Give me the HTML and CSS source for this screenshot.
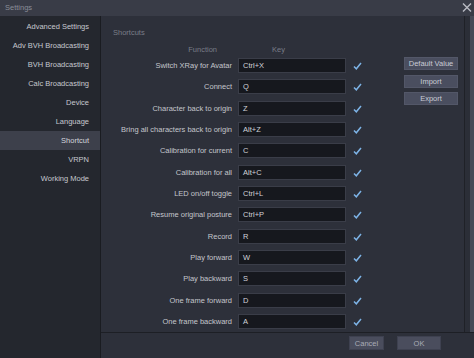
FILE: index.html
```html
<!DOCTYPE html>
<html>
<head>
<meta charset="utf-8">
<link rel="stylesheet" href="styles.css">
</head>
<body>
<div class="titlebar">
  <span class="title">Settings</span>
  <svg class="close" width="10" height="9" viewBox="0 0 10 9"><path d="M1 0.5 L9 8.5 M9 0.5 L1 8.5" stroke="#b9bbc3" stroke-width="1.4"/></svg>
</div>
<div class="window">
  <nav class="sidebar">
    <div class="nav-item">Advanced Settings</div>
    <div class="nav-item">Adv BVH Broadcasting</div>
    <div class="nav-item">BVH Broadcasting</div>
    <div class="nav-item">Calc Broadcasting</div>
    <div class="nav-item">Device</div>
    <div class="nav-item">Language</div>
    <div class="nav-item active">Shortcut</div>
    <div class="nav-item">VRPN</div>
    <div class="nav-item">Working Mode</div>
  </nav>
  <div class="main">
    <div class="content">
      <div class="panel">
        <div class="form">
          <div class="section-title">Shortcuts</div>
          <div class="grid">
            <div class="head head-fn">Function</div>
            <div class="head head-key">Key</div>
            <div></div>

            <div class="label">Switch XRay for Avatar</div><div class="key">Ctrl+X</div><div class="check"><svg width="9" height="8" viewBox="0 0 9 8"><path d="M1 4.5 L3.3 6.8 L8 1" fill="none" stroke="#7db3e6" stroke-width="1.5"/></svg></div>
            <div class="label">Connect</div><div class="key">Q</div><div class="check"><svg width="9" height="8" viewBox="0 0 9 8"><path d="M1 4.5 L3.3 6.8 L8 1" fill="none" stroke="#7db3e6" stroke-width="1.5"/></svg></div>
            <div class="label">Character back to origin</div><div class="key">Z</div><div class="check"><svg width="9" height="8" viewBox="0 0 9 8"><path d="M1 4.5 L3.3 6.8 L8 1" fill="none" stroke="#7db3e6" stroke-width="1.5"/></svg></div>
            <div class="label">Bring all characters back to origin</div><div class="key">Alt+Z</div><div class="check"><svg width="9" height="8" viewBox="0 0 9 8"><path d="M1 4.5 L3.3 6.8 L8 1" fill="none" stroke="#7db3e6" stroke-width="1.5"/></svg></div>
            <div class="label">Calibration for current</div><div class="key">C</div><div class="check"><svg width="9" height="8" viewBox="0 0 9 8"><path d="M1 4.5 L3.3 6.8 L8 1" fill="none" stroke="#7db3e6" stroke-width="1.5"/></svg></div>
            <div class="label">Calibration for all</div><div class="key">Alt+C</div><div class="check"><svg width="9" height="8" viewBox="0 0 9 8"><path d="M1 4.5 L3.3 6.8 L8 1" fill="none" stroke="#7db3e6" stroke-width="1.5"/></svg></div>
            <div class="label">LED on/off toggle</div><div class="key">Ctrl+L</div><div class="check"><svg width="9" height="8" viewBox="0 0 9 8"><path d="M1 4.5 L3.3 6.8 L8 1" fill="none" stroke="#7db3e6" stroke-width="1.5"/></svg></div>
            <div class="label">Resume original posture</div><div class="key">Ctrl+P</div><div class="check"><svg width="9" height="8" viewBox="0 0 9 8"><path d="M1 4.5 L3.3 6.8 L8 1" fill="none" stroke="#7db3e6" stroke-width="1.5"/></svg></div>
            <div class="label">Record</div><div class="key">R</div><div class="check"><svg width="9" height="8" viewBox="0 0 9 8"><path d="M1 4.5 L3.3 6.8 L8 1" fill="none" stroke="#7db3e6" stroke-width="1.5"/></svg></div>
            <div class="label">Play forward</div><div class="key">W</div><div class="check"><svg width="9" height="8" viewBox="0 0 9 8"><path d="M1 4.5 L3.3 6.8 L8 1" fill="none" stroke="#7db3e6" stroke-width="1.5"/></svg></div>
            <div class="label">Play backward</div><div class="key">S</div><div class="check"><svg width="9" height="8" viewBox="0 0 9 8"><path d="M1 4.5 L3.3 6.8 L8 1" fill="none" stroke="#7db3e6" stroke-width="1.5"/></svg></div>
            <div class="label">One frame forward</div><div class="key">D</div><div class="check"><svg width="9" height="8" viewBox="0 0 9 8"><path d="M1 4.5 L3.3 6.8 L8 1" fill="none" stroke="#7db3e6" stroke-width="1.5"/></svg></div>
            <div class="label">One frame backward</div><div class="key">A</div><div class="check"><svg width="9" height="8" viewBox="0 0 9 8"><path d="M1 4.5 L3.3 6.8 L8 1" fill="none" stroke="#7db3e6" stroke-width="1.5"/></svg></div>
          </div>
        </div>
        <div class="actions">
          <button class="btn">Default Value</button>
          <button class="btn">Import</button>
          <button class="btn">Export</button>
        </div>
      </div>
      <div class="gutter"></div>
      <div class="frame"></div>
    </div>
    <div class="footer">
      <button class="btn foot cancel">Cancel</button>
      <button class="btn foot ok">OK</button>
    </div>
  </div>
</div>
</body>
</html>
```

FILE: styles.css
```css
* { box-sizing: border-box; }
html, body {
  margin: 0;
  padding: 0;
}
body {
  width: 474px;
  height: 358px;
  overflow: hidden;
  background: #2d303a;
  font-family: "Liberation Sans", Arial, sans-serif;
  font-size: 7.5px;
  color: #c4c6cc;
}
.titlebar {
  height: 16px;
  background: #393c47;
  display: flex;
  align-items: center;
  justify-content: space-between;
  padding: 0 2px 2px 5px;
}
.title {
  color: #8a8d98;
  font-size: 7.5px;
}
.close { display: block; margin-top: 1px; }
.window {
  display: flex;
  height: 342px;
}
.sidebar {
  width: 101px;
  background: #24272e;
  border-right: 1px solid #1a1c21;
  padding-top: 1px;
}
.nav-item {
  height: 19px;
  line-height: 19px;
  text-align: right;
  padding-right: 11px;
  color: #c6c8ce;
}
.nav-item.active {
  background: #3d404b;
  color: #d4d6dc;
}
.main {
  flex: 1;
  display: flex;
  flex-direction: column;
}
.content {
  display: flex;
  height: 316px;
}
.panel {
  width: 364px;
  border-right: 1px solid #1f2127;
  display: flex;
  padding-top: 12px;
}
.gutter {
  width: 5px;
  background: #2b2e37;
}
.frame {
  flex: 1;
  background: #464a57;
}
.form {
  width: 270px;
}
.section-title {
  height: 10px;
  line-height: 10px;
  padding-left: 12px;
  color: #7a7d88;
  margin-bottom: 7px;
}
.grid {
  display: grid;
  grid-template-columns: 131px 108px 14px;
  column-gap: 6px;
  grid-auto-rows: 21.33px;
  grid-template-rows: 10px;
}
.head {
  line-height: 10px;
  color: #797c87;
}
.head-fn { text-align: right; padding-right: 15px; }
.head-key { padding-left: 34px; }
.label {
  text-align: right;
  line-height: 21.33px;
  white-space: nowrap;
}
.key {
  margin-top: 3px;
  height: 15px;
  line-height: 13px;
  background: #16181e;
  border: 1px solid #3a3d48;
  padding-left: 4px;
  color: #d0d2d8;
}
.check {
  display: flex;
  align-items: center;
  padding-left: 1px;
  padding-top: 1px;
}
.check svg { display: block; }
.actions {
  display: flex;
  flex-direction: column;
  gap: 4.5px;
  margin-left: 33px;
  margin-top: 29px;
}
.btn {
  font-family: inherit;
  font-size: 7.5px;
  width: 54px;
  height: 13px;
  padding: 0;
  border: 1px solid #535768;
  background: #4a4e5f;
  color: #c9cbd5;
  line-height: 11px;
}
.footer {
  height: 26px;
  border-top: 1px solid #1d1f25;
  display: flex;
  padding-top: 3px;
  padding-left: 248px;
  gap: 13px;
}
.btn.foot {
  height: 14px;
  color: #a9acb6;
  background: #4a4d5d;
  border-color: #3e4150;
}
.cancel { width: 35px; }
.ok { width: 44px; }
```
